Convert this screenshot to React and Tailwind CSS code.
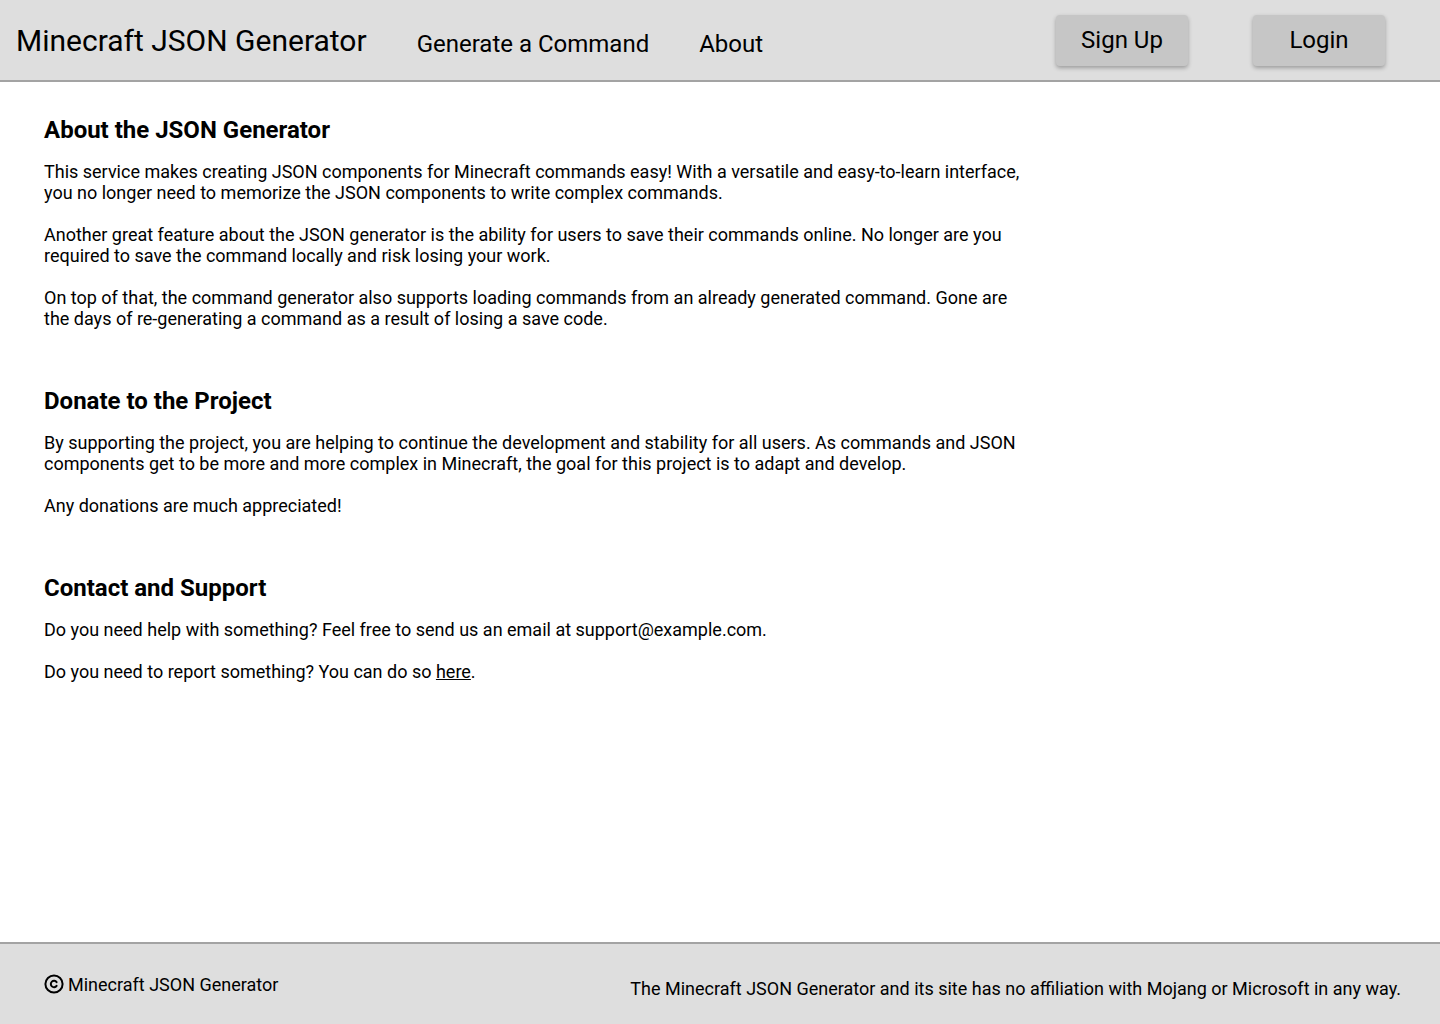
import React from "react";

function CopyrightIcon() {
  return (
    <svg width="20" height="20" viewBox="0 0 20 20" className="shrink-0">
      <circle cx="10" cy="10" r="8.6" fill="none" stroke="#000" strokeWidth="2" />
      <path d="M12.6 8.1 A3.2 3.2 0 1 0 12.6 11.9" fill="none" stroke="#000" strokeWidth="2" strokeLinecap="round" />
    </svg>
  );
}

export default function App() {
  const sections = [
    {
      title: "About the JSON Generator",
      paras: [
        "This service makes creating JSON components for Minecraft commands easy! With a versatile and easy-to-learn interface, you no longer need to memorize the JSON components to write complex commands.",
        "Another great feature about the JSON generator is the ability for users to save their commands online. No longer are you required to save the command locally and risk losing your work.",
        "On top of that, the command generator also supports loading commands from an already generated command. Gone are the days of re-generating a command as a result of losing a save code.",
      ],
    },
    {
      title: "Donate to the Project",
      paras: [
        "By supporting the project, you are helping to continue the development and stability for all users. As commands and JSON components get to be more and more complex in Minecraft, the goal for this project is to adapt and develop.",
        "Any donations are much appreciated!",
      ],
    },
  ];

  return (
    <div className="min-h-screen flex flex-col bg-white text-black font-['Roboto',sans-serif]">
      <header className="h-[82px] bg-[#dedede] border-b-2 border-[#a3a3a3] flex items-center pl-4 pr-[55px]">
        <div className="text-[30px] leading-none mt-[2px]">Minecraft JSON Generator</div>
        <nav className="flex items-center gap-[50px] ml-[50px] mt-[8px] text-[24px] leading-none">
          <a>Generate a Command</a>
          <a>About</a>
        </nav>
        <div className="ml-auto flex gap-[65px] mt-0">
          <button className="w-[132px] h-[51px] rounded bg-[#c6c6c6] shadow-[0_2px_4px_rgba(0,0,0,0.3)] text-[24px] leading-none">Sign Up</button>
          <button className="w-[132px] h-[51px] rounded bg-[#c6c6c6] shadow-[0_2px_4px_rgba(0,0,0,0.3)] text-[24px] leading-none">Login</button>
        </div>
      </header>

      <main className="flex-1 px-11 pt-[33px]">
        <div className="max-w-[985px] flex flex-col gap-[57px]">
          {sections.map((s) => (
            <section key={s.title}>
              <h2 className="text-[24px] font-bold leading-[30px] mb-[16px]">{s.title}</h2>
              <div className="flex flex-col gap-[21px] text-[18px] leading-[21px]">
                {s.paras.map((p, i) => (
                  <p key={i}>{p}</p>
                ))}
              </div>
            </section>
          ))}
          <section>
            <h2 className="text-[24px] font-bold leading-[30px] mb-[16px]">Contact and Support</h2>
            <div className="flex flex-col gap-[21px] text-[18px] leading-[21px]">
              <p>Do you need help with something? Feel free to send us an email at support@example.com.</p>
              <p>
                Do you need to report something? You can do so <a className="underline">here</a>.
              </p>
            </div>
          </section>
        </div>
      </main>

      <footer className="h-[82px] bg-[#dedede] border-t-2 border-[#a3a3a3] flex items-center justify-between pl-11 pr-[39px]">
        <div className="flex items-center gap-[4px] text-[18px]">
          <CopyrightIcon />
          <span>Minecraft JSON Generator</span>
        </div>
        <div className="text-[18px] mt-[8px]">
          The Minecraft JSON Generator and its site has no affiliation with Mojang or Microsoft in any way.
        </div>
      </footer>
    </div>
  );
}
